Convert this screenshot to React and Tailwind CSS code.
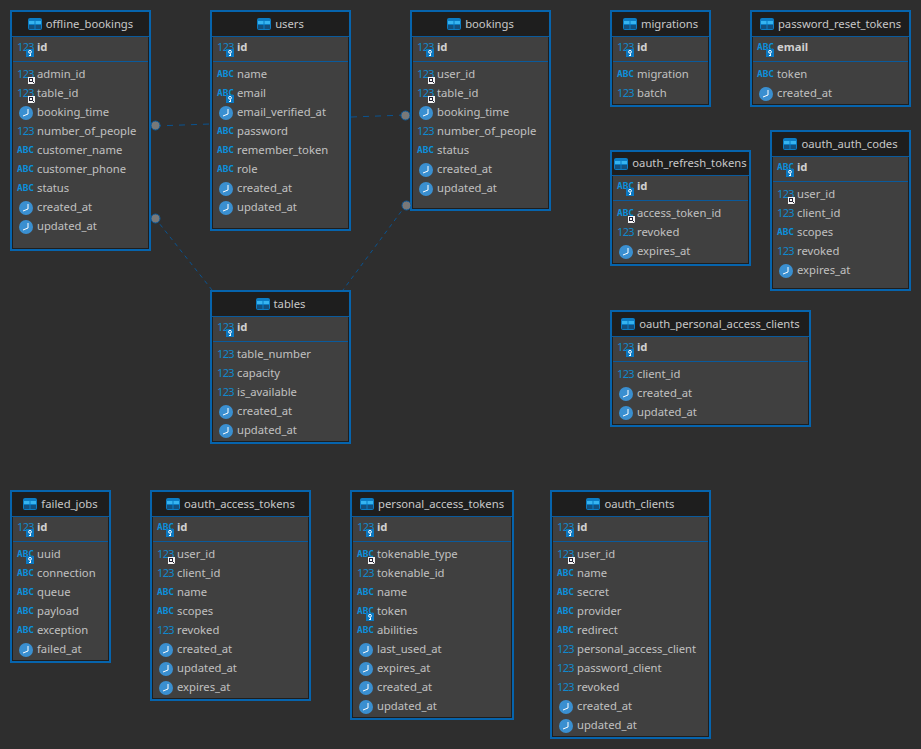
import React from 'react';

// row spec: [name, type, badge]  type: n=123 s=ABC t=clock, badge: k=key f=foreign
const tables = [
  { name: 'offline_bookings', x: 10, y: 10, w: 141, h: 241, pk: [['id', 'n', 'k']], rows: [['admin_id', 'n', 'f'], ['table_id', 'n', 'f'], ['booking_time', 't'], ['number_of_people', 'n'], ['customer_name', 's'], ['customer_phone', 's'], ['status', 's'], ['created_at', 't'], ['updated_at', 't']] },
  { name: 'users', x: 210, y: 10, w: 141, h: 221, pk: [['id', 'n', 'k']], rows: [['name', 's'], ['email', 's', 'k'], ['email_verified_at', 't'], ['password', 's'], ['remember_token', 's'], ['role', 's'], ['created_at', 't'], ['updated_at', 't']] },
  { name: 'bookings', x: 410, y: 10, w: 141, h: 201, pk: [['id', 'n', 'k']], rows: [['user_id', 'n', 'f'], ['table_id', 'n', 'f'], ['booking_time', 't'], ['number_of_people', 'n'], ['status', 's'], ['created_at', 't'], ['updated_at', 't']] },
  { name: 'migrations', x: 610, y: 10, w: 101, h: 97, pk: [['id', 'n', 'k']], rows: [['migration', 's'], ['batch', 'n']] },
  { name: 'password_reset_tokens', x: 750, y: 10, w: 161, h: 97, pk: [['email', 's', 'k']], rows: [['token', 's'], ['created_at', 't']] },
  { name: 'oauth_refresh_tokens', x: 610, y: 150, w: 141, h: 116, short: true, pk: [['id', 's', 'k']], rows: [['access_token_id', 's', 'f'], ['revoked', 'n'], ['expires_at', 't']] },
  { name: 'oauth_auth_codes', x: 770, y: 130, w: 141, h: 161, pk: [['id', 's', 'k']], rows: [['user_id', 'n', 'f'], ['client_id', 'n'], ['scopes', 's'], ['revoked', 'n'], ['expires_at', 't']] },
  { name: 'oauth_personal_access_clients', x: 610, y: 310, w: 201, h: 117, pk: [['id', 'n', 'k']], rows: [['client_id', 'n'], ['created_at', 't'], ['updated_at', 't']] },
  { name: 'tables', x: 210, y: 290, w: 141, h: 154, pk: [['id', 'n', 'k']], rows: [['table_number', 'n'], ['capacity', 'n'], ['is_available', 'n'], ['created_at', 't'], ['updated_at', 't']] },
  { name: 'failed_jobs', x: 10, y: 490, w: 101, h: 173, pk: [['id', 'n', 'k']], rows: [['uuid', 's', 'k'], ['connection', 's'], ['queue', 's'], ['payload', 's'], ['exception', 's'], ['failed_at', 't']] },
  { name: 'oauth_access_tokens', x: 150, y: 490, w: 161, h: 211, pk: [['id', 's', 'k']], rows: [['user_id', 'n', 'f'], ['client_id', 'n'], ['name', 's'], ['scopes', 's'], ['revoked', 'n'], ['created_at', 't'], ['updated_at', 't'], ['expires_at', 't']] },
  { name: 'personal_access_tokens', x: 350, y: 490, w: 164, h: 230, pk: [['id', 'n', 'k']], rows: [['tokenable_type', 's', 'f'], ['tokenable_id', 'n'], ['name', 's'], ['token', 's', 'k'], ['abilities', 's'], ['last_used_at', 't'], ['expires_at', 't'], ['created_at', 't'], ['updated_at', 't']] },
  { name: 'oauth_clients', x: 550, y: 490, w: 161, h: 249, pk: [['id', 'n', 'k']], rows: [['user_id', 'n', 'f'], ['name', 's'], ['secret', 's'], ['provider', 's'], ['redirect', 's'], ['personal_access_client', 'n'], ['password_client', 'n'], ['revoked', 'n'], ['created_at', 't'], ['updated_at', 't']] },
];

function TableIcon() {
  return (
    <svg width="14" height="12" viewBox="0 0 14 12" className="shrink-0">
      <rect x="0" y="0" width="14" height="12" rx="2" fill="#0b7cc4" />
      <rect x="1" y="3" width="5.5" height="3" fill="#35b4f0" />
      <rect x="7.5" y="3" width="5.5" height="3" fill="#35b4f0" />
      <rect x="1" y="7" width="5.5" height="4" fill="#12507f" />
      <rect x="7.5" y="7" width="5.5" height="4" fill="#12507f" />
    </svg>
  );
}

function KeyBadge() {
  return (
    <svg width="8" height="8" viewBox="0 0 8 8" className="absolute left-[9px] top-[8px]">
      <rect width="8" height="8" fill="#0a78c2" />
      <circle cx="4" cy="2.8" r="1.4" fill="none" stroke="#fff" strokeWidth="1" />
      <path d="M4.5 4.5V7M3 6.5H4.5" stroke="#fff" strokeWidth="1" />
    </svg>
  );
}

function FkBadge() {
  return (
    <svg width="7" height="7" viewBox="0 0 7 7" className="absolute left-[11px] top-[9px]">
      <rect width="7" height="7" fill="#f4f4f4" />
      <rect x="1.5" y="1.5" width="3" height="3" fill="none" stroke="#223" strokeWidth="1" />
      <path d="M4.5 4.5L6.5 6.5" stroke="#223" strokeWidth="1" />
    </svg>
  );
}

function TypeIcon({ type, badge }) {
  return (
    <span className="relative flex h-[14px] w-[17px] shrink-0 items-center justify-center">
      {type === 'n' && <span className="-translate-y-[1px] text-[11px] leading-none tracking-[-0.6px] text-[#1088cc]">123</span>}
      {type === 's' && <span className="-translate-y-[1px] font-['DejaVu_Sans_Mono',monospace] text-[9.5px] leading-none font-bold text-[#0b8fdc]">ABC</span>}
      {type === 't' && (
        <svg width="14" height="14" viewBox="0 0 14 14">
          <circle cx="7" cy="7" r="7" fill="#3a8fd0" />
          <path d="M9 3V8L4 10" fill="none" stroke="#fff" strokeWidth="1" />
        </svg>
      )}
      {badge === 'k' && <KeyBadge />}
      {badge === 'f' && <FkBadge />}
    </span>
  );
}

function Row({ row, bold }) {
  return (
    <div className="flex h-[19px] items-center gap-[3px] pl-[4px]">
      <TypeIcon type={row[1]} badge={row[2]} />
      <span className={bold ? 'font-bold text-[#d0d0d0]' : 'text-[#c0c0c0]'}>{row[0]}</span>
    </div>
  );
}

function TableNode({ t }) {
  return (
    <div
      className="absolute flex flex-col overflow-hidden border-2 border-[#0664ad] bg-[#404040] text-[11.25px] whitespace-nowrap"
      style={{ left: t.x, top: t.y, width: t.w, height: t.h }}
    >
      <div className={(t.short ? 'h-[24px] ' : 'h-[25px] ') + 'flex shrink-0 items-center justify-center gap-[4px] border-b border-[#0a5a9c] bg-[#1e1e1e] text-[#c8c8c8]'}>
        <TableIcon />
        <span>{t.name}</span>
      </div>
      <div className="flex-1 border border-t-0 border-[#1e1e1e]">
        <div className="border-b border-[#0a5a9c] pt-[1px] pb-[4px]">
          {t.pk.map((r) => <Row key={r[0]} row={r} bold />)}
        </div>
        <div className="pt-[3px]">
          {t.rows.map((r) => <Row key={r[0]} row={r} />)}
        </div>
      </div>
    </div>
  );
}

function Links() {
  const dash = { stroke: '#0a5390', strokeWidth: 1, strokeDasharray: '6 6', fill: 'none' };
  const short = { stroke: '#0a5390', strokeWidth: 1, strokeDasharray: '4 4', fill: 'none' };
  return (
    <svg width="921" height="749" className="absolute left-0 top-0">
      <path d="M155 126L210 124" style={dash} />
      <path d="M351 117L406 115" style={dash} />
      <path d="M155 218L212 290" style={short} />
      <path d="M406 205L343 290" style={short} />
      {[[155.5, 125.5], [155.5, 218.5], [405.5, 115.5], [406.5, 205.5]].map(([cx, cy]) => (
        <circle key={cx + '-' + cy} cx={cx} cy={cy} r="4.5" fill="#787878" stroke="#0a5a9c" strokeWidth="1" />
      ))}
    </svg>
  );
}

export default function App() {
  return (
    <div className="relative h-[749px] w-[921px] overflow-hidden bg-[#2e2e2e] font-['Noto_Sans',sans-serif]">
      {tables.map((t) => <TableNode key={t.name} t={t} />)}
      <Links />
    </div>
  );
}
